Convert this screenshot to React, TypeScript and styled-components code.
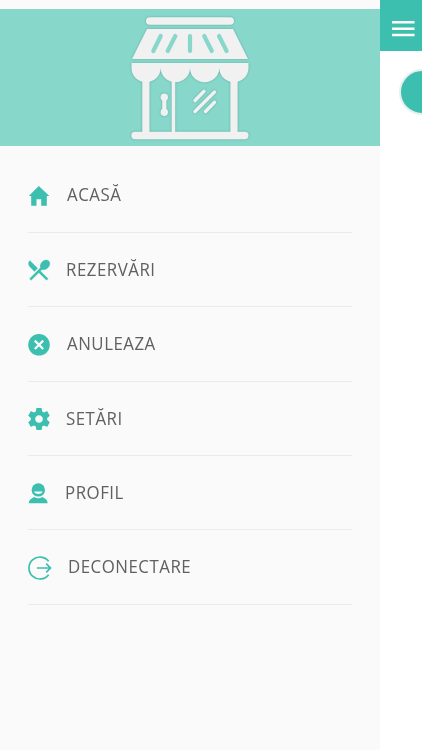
import React from "react";
import styled, { createGlobalStyle } from "styled-components";

const GlobalStyle = createGlobalStyle`
  * { box-sizing: border-box; }
  body { margin: 0; background: #fff; font-family: "Open Sans", "Noto Sans", sans-serif; }
`;

const TEAL = "#3cbfae";

const Screen = styled.div`
  display: flex;
  width: 422px;
  height: 750px;
  overflow: hidden;
  background: #fff;
`;

const Drawer = styled.aside`
  width: 379.6px;
  flex: none;
  padding-top: 9px;
  background: #fafafa;
`;

const Banner = styled.header`
  display: flex;
  justify-content: center;
  height: 137px;
  background: #87d7cb;
`;

const ShopArt = styled.svg`
  display: block;
  width: 140px;
  height: 137px;
  filter: drop-shadow(0 0.9px 0.8px rgba(50, 120, 110, 0.45));
`;

const Menu = styled.nav`
  display: flex;
  flex-direction: column;
  padding: 12.5px 27.6px 0 28px;
`;

const MenuItem = styled.a`
  display: flex;
  align-items: center;
  height: 74.35px;
  border-bottom: 1px solid #ebebeb;
  color: #606060;
`;

const IconSlot = styled.svg<{ $gap: number }>`
  display: block;
  flex: none;
  width: 24px;
  height: 26px;
  margin: 1.4px ${(p) => p.$gap}px 0 0;
  overflow: visible;
  color: ${TEAL};
`;

const Label = styled.span`
  margin-bottom: 1.4px;
  font-size: 18px;
  line-height: 24px;
  letter-spacing: 0.55px;
  white-space: nowrap;
  transform: scaleX(0.935);
  transform-origin: left center;
`;

const Page = styled.main`
  flex: 1;
  overflow: hidden;
`;

const TopBar = styled.div`
  display: flex;
  align-items: flex-start;
  height: 51.3px;
  padding: 21.3px 0 0 12.8px;
  background: ${TEAL};
`;

const Burger = styled.svg`
  display: block;
  width: 23px;
  height: 16px;
`;

const RoundButton = styled.div`
  width: 46px;
  height: 46px;
  margin: 17.6px 0 0 19.6px;
  border: 2px solid #e6efef;
  border-radius: 50%;
  background: ${TEAL};
`;

const Shop = () => (
  <ShopArt viewBox="120 9 140 137" fill="#f1f1f1">
    <rect x="146" y="17.2" width="88" height="7.6" rx="3.8" />
    <path d="M147 29H233L248 59H132Z" />
    <g stroke="#87d7cb" strokeWidth="4.2" strokeLinecap="round">
      <path d="M160.7 36L153.3 51M175.3 36L167.7 51M190 36V51M204.2 36L211.8 51M219 36L226.6 51" />
    </g>
    <path d="M131.5 63H248.5V68C248.5 76 242 82.2 234 82.2S219.3 76 219.3 68C219.3 76 212.8 82.2 204.6 82.2S190 76 190 68C190 76 183.5 82.2 175.4 82.2S160.7 76 160.7 68C160.7 76 154.2 82.2 146 82.2S131.5 76 131.5 68Z" />
    <path d="M142.3 79H149.5V134H142.3ZM171.6 79H175.2V134H171.6ZM230.4 79H237.6V134H230.4Z" />
    <rect x="131.3" y="131.8" width="117.2" height="7.4" rx="3.7" />
    <circle cx="164.3" cy="97.3" r="3.7" />
    <circle cx="164.3" cy="112.3" r="3.7" />
    <path d="M162.2 97H166.4V113H162.2Z" />
    <path d="M195 100.5L204 91.2M195 111.5L214.5 92M205.5 111.5L214.5 102.2" stroke="#f1f1f1" strokeWidth="3.4" strokeLinecap="round" />
  </ShopArt>
);

const HomeGlyph = () => (
  <path fill="currentColor" d="M.8 12.9L10.8 3L21.4 12.9H18.8V22.8H13.2V16.2H8.5V22.8H3.2V12.9Z" />
);

const CutleryGlyph = () => (
  <g transform="translate(-2.6 -.5) scale(1.12)" fill="currentColor" stroke="currentColor" strokeWidth=".25">
    <path d="M8.1 13.34l2.83-2.83L3.91 3.5c-1.56 1.56-1.56 4.09 0 5.66l4.19 4.18zm6.78-1.81c1.53.71 3.68.21 5.27-1.38 1.91-1.91 2.28-4.65.81-6.12-1.46-1.46-4.2-1.1-6.12.81-1.59 1.59-2.09 3.74-1.38 5.27L3.7 19.87l1.41 1.41L12 14.41l6.88 6.88 1.41-1.41L13.41 13l1.47-1.47z" />
  </g>
);

const CancelGlyph = () => (
  <>
    <circle cx="11" cy="12.8" r="10.8" fill="currentColor" />
    <path d="M6.8 8.6L15.2 17M15.2 8.6L6.8 17" stroke="#fafafa" strokeWidth="2.2" />
  </>
);

const GearGlyph = () => (
  <g transform="translate(-2.2 -.2) scale(1.1)" fill="currentColor">
    <path fillRule="evenodd" d="M19.43 12.98c.04-.32.07-.64.07-.98s-.03-.66-.07-.98l2.11-1.65c.19-.15.24-.42.12-.64l-2-3.46c-.12-.22-.39-.3-.61-.22l-2.49 1c-.52-.4-1.08-.73-1.69-.98l-.38-2.65C14.46 2.18 14.25 2 14 2h-4c-.25 0-.46.18-.49.42l-.38 2.65c-.61.25-1.17.59-1.69.98l-2.49-1c-.23-.09-.49 0-.61.22l-2 3.46c-.13.22-.07.49.12.64l2.11 1.65c-.04.32-.07.65-.07.98s.03.66.07.98l-2.11 1.65c-.19.15-.24.42-.12.64l2 3.46c.12.22.39.3.61.22l2.49-1c.52.4 1.08.73 1.69.98l.38 2.65c.03.24.24.42.49.42h4c.25 0 .46-.18.49-.42l.38-2.65c.61-.25 1.17-.59 1.69-.98l2.49 1c.23.09.49 0 .61-.22l2-3.46c.12-.22.07-.49-.12-.64l-2.11-1.65zM12 15.5c-1.93 0-3.5-1.57-3.5-3.5s1.57-3.5 3.5-3.5 3.5 1.57 3.5 3.5-1.57 3.5-3.5 3.5z" />
  </g>
);

const PersonGlyph = () => (
  <>
    <circle cx="10.3" cy="9.9" r="6.7" fill="currentColor" />
    <path d="M6 11.6H14.6C14 14.8 6.6 14.8 6 11.6Z" fill="#fafafa" />
    <path d="M.7 23.2C.8 20.2 3 18.4 6.2 17Q10.3 19.6 14.4 17C17.6 18.4 19.5 20.2 19.7 23.2Z" fill="currentColor" />
  </>
);

const LogoutGlyph = () => (
  <path d="M20.3 6.3A11 11 0 1 0 20.3 19.7M8.5 13H22M17.8 8.6L22.1 13L17.8 17.4" transform="translate(.4 0)" fill="none" stroke="currentColor" strokeWidth="1.7" />
);

const items = [
  { label: "ACASĂ", Glyph: HomeGlyph, gap: 14.6 },
  { label: "REZERVĂRI", Glyph: CutleryGlyph, gap: 13.8 },
  { label: "ANULEAZA", Glyph: CancelGlyph, gap: 14.6 },
  { label: "SETĂRI", Glyph: GearGlyph, gap: 14.2 },
  { label: "PROFIL", Glyph: PersonGlyph, gap: 12.7 },
  { label: "DECONECTARE", Glyph: LogoutGlyph, gap: 15.7 },
];

export default function App() {
  return (
    <>
      <GlobalStyle />
      <Screen>
        <Drawer>
          <Banner>
            <Shop />
          </Banner>
          <Menu>
            {items.map(({ label, Glyph, gap }) => (
              <MenuItem key={label}>
                <IconSlot $gap={gap} viewBox="0 0 24 26">
                  <Glyph />
                </IconSlot>
                <Label>{label}</Label>
              </MenuItem>
            ))}
          </Menu>
        </Drawer>
        <Page>
          <TopBar>
            <Burger viewBox="0 0 23 16" fill="#fff">
              <path d="M0 0H22.5V2.5H0ZM0 6.4H22.5V8.9H0ZM0 12.8H22.5V15.3H0Z" />
            </Burger>
          </TopBar>
          <RoundButton />
        </Page>
      </Screen>
    </>
  );
}
